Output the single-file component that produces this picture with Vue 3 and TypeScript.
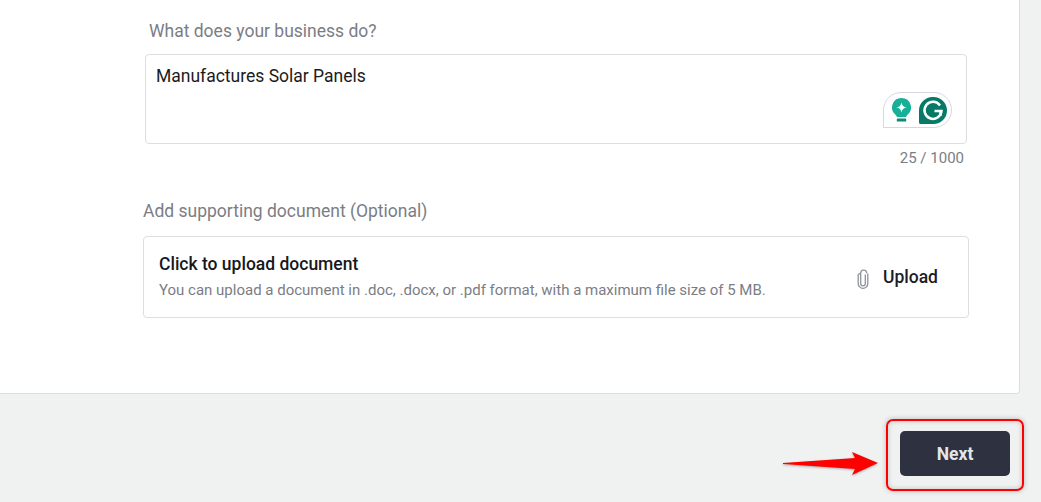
<script setup lang="ts">
const title: string = 'What does your business do?'
const answer: string = 'Manufactures Solar Panels'
</script>

<template>
  <div class="page">
    <main class="card">
      <section class="business">
        <label class="label">{{ title }}</label>
        <div class="textarea">
          <span>{{ answer }}</span>
          <div class="grammarly">
            <svg width="19" height="24" viewBox="0 0 19 24">
              <path d="M9.500 0a9.500 9.500 0 0 0-5.800 17c.8.700 1.100 1.300 1.100 2h9.400c0-.7.300-1.300 1.100-2A9.500 9.500 0 0 0 9.500 0z" fill="#15b097" />
              <path d="M9.500 4.500c.6 3 2 4.400 5 5-3 .6-4.400 2-5 5-.6-3-2-4.400-5-5 3-.6 4.400-2 5-5z" fill="#fff" />
              <rect x="4.800" y="20.500" width="9.400" height="3" rx=".6" fill="#0f8a78" />
            </svg>
            <svg width="28" height="27" viewBox="0 0 28 27">
              <path d="M14.500 0a13.500 13.500 0 1 1 0 27H1.500A1.500 1.500 0 0 1 0 25.500V13.500A14 13.500 0 0 1 14.500 0z" fill="#067a66" />
              <path d="M21 8.500a8.500 8.500 0 1 0 1.500 5.500h-7" fill="none" stroke="#fff" stroke-width="2.500" />
              <path d="M21.500 14v5" fill="none" stroke="#fff" stroke-width="2.500" />
            </svg>
          </div>
        </div>
        <div class="count">25 / 1000</div>
      </section>

      <section class="support">
        <label class="label">Add supporting document (Optional)</label>
        <div class="upload">
          <div class="upload-text">
            <strong>Click to upload document</strong>
            <span>You can upload a document in .doc, .docx, or .pdf format, with a maximum file size of 5 MB.</span>
          </div>
          <button class="upload-btn" type="button">
            <svg width="12" height="20" viewBox="0 0 12 20">
              <path d="M8.300 5.500v9a2.300 2.300 0 0 1-4.600 0V4.200a3 3 0 0 1 6 0" fill="none" stroke="#8f939b" stroke-width="1.300" />
              <path d="M1.200 5.500v9a4.800 4.800 0 0 0 9.600 0V4.500" fill="none" stroke="#8f939b" stroke-width="1.300" />
              <path d="M3.700 4.200A3 3 0 0 0 1.200 6" fill="none" stroke="#8f939b" stroke-width="1.300" />
            </svg>
            Upload
          </button>
        </div>
      </section>
    </main>

    <footer class="footer">
      <button class="next" type="button">Next</button>
      <div class="highlight"></div>
      <svg class="arrow" width="100" height="28" viewBox="0 0 100 28">
        <path d="M1 13 L73 8 L70 2 L96 13 L70 25 L73 19 L1 14 Z" fill="#fe0000" />
      </svg>
    </footer>
  </div>
</template>

<style scoped>
.page {
  width: 1041px;
  height: 502px;
  background: #f0f2f2;
  font-family: Roboto, "Liberation Sans", sans-serif;
  display: flex;
  flex-direction: column;
  overflow: hidden;
}
.card {
  width: 1020px;
  height: 394px;
  box-sizing: border-box;
  background: #fff;
  border-right: 1px solid #dcdee0;
  border-bottom: 1px solid #dcdee0;
  border-bottom-right-radius: 4px;
  padding: 20px 50px 0 143px;
  flex: none;
}
.label {
  display: block;
  font-size: 17.500px;
  line-height: 22px;
  color: #7b7d85;
}
.business {
  padding: 0 2px;
}
.business .label {
  padding-left: 4px;
}
.textarea {
  position: relative;
  margin-top: 12px;
  height: 90px;
  box-sizing: border-box;
  border: 1px solid #dcdee0;
  border-radius: 4px;
  padding: 10px 10px;
  font-size: 17.500px;
  line-height: 22px;
  color: #1b1c20;
}
.grammarly {
  position: absolute;
  right: 14px;
  bottom: 15px;
  width: 69px;
  height: 36px;
  box-sizing: border-box;
  border: 1px solid #d5d8e4;
  border-radius: 18px 18px 18px 0;
  background: #fff;
  display: flex;
  align-items: center;
  gap: 8px;
  padding: 0 3px 0 8px;
}
.count {
  margin-top: 5px;
  padding-right: 3px;
  text-align: right;
  font-size: 15px;
  line-height: 18px;
  color: #7b7d85;
}
.support {
  margin-top: 33px;
}
.upload {
  margin-top: 14px;
  height: 82px;
  box-sizing: border-box;
  border: 1px solid #dcdee0;
  border-radius: 4px;
  display: flex;
  align-items: center;
  justify-content: space-between;
  padding: 0 30px 0 15px;
}
.upload-text {
  display: flex;
  flex-direction: column;
  gap: 4px;
  margin-bottom: 3px;
}
.upload-text strong {
  font-size: 17.500px;
  line-height: 24px;
  font-weight: 500;
  color: #17181c;
}
.upload-text span {
  font-size: 15px;
  line-height: 20px;
  color: #7b7d85;
}
.upload-btn {
  border: 0;
  background: none;
  padding: 0;
  display: flex;
  align-items: center;
  gap: 14px;
  font-family: inherit;
  font-size: 17.500px;
  font-weight: 500;
  color: #1b1c26;
}
.upload-btn svg {
  margin-top: 4px;
}
.footer {
  position: relative;
  flex: 1;
  display: flex;
  justify-content: flex-end;
  align-items: flex-start;
  padding: 37px 31px 0 0;
}
.next {
  width: 110px;
  height: 45px;
  border: 0;
  border-radius: 5px;
  background: #2e313f;
  color: #e4e6ea;
  font-family: inherit;
  font-size: 17.500px;
  font-weight: 700;
}
.highlight {
  position: absolute;
  left: 886px;
  top: 25px;
  width: 138px;
  height: 72px;
  box-sizing: border-box;
  border: 2px solid #fe0000;
  border-radius: 7px;
  box-shadow: 0 0 5px rgba(0, 0, 0, 0.25), inset 0 0 5px rgba(0, 0, 0, 0.2);
}
.arrow {
  position: absolute;
  left: 782px;
  top: 56px;
  filter: drop-shadow(0 1px 1px rgba(0, 0, 0, 0.3));
}
</style>
